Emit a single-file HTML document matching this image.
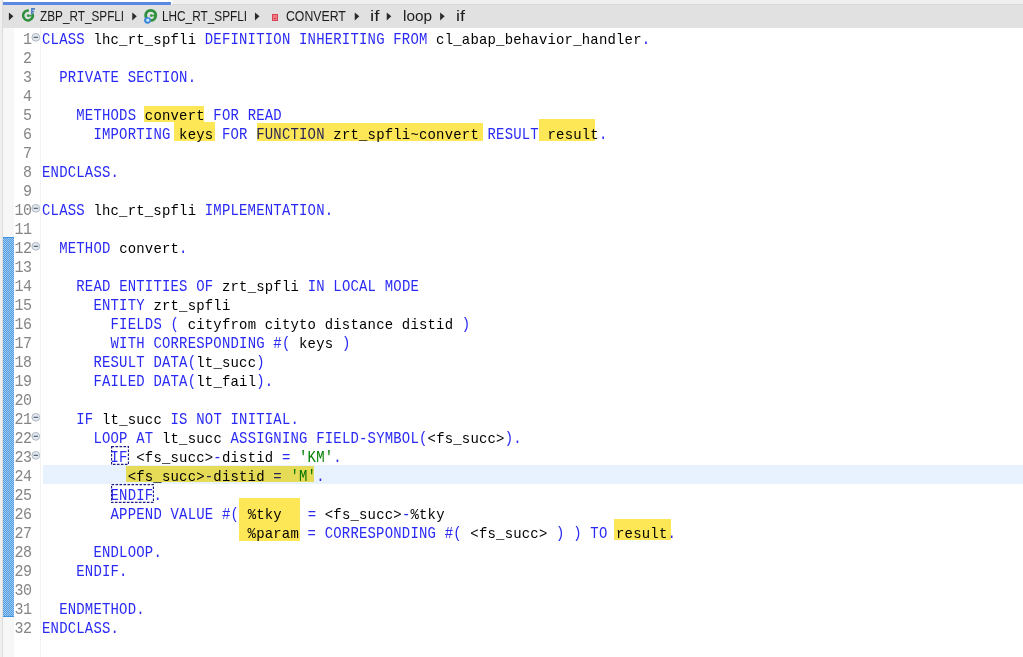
<!DOCTYPE html>
<html><head><meta charset="utf-8">
<style>
html,body{margin:0;padding:0;}
body{width:1023px;height:657px;overflow:hidden;background:#fff;position:relative;}
.a{position:absolute;}
.bc{position:absolute;top:7px;height:17px;line-height:17px;font-family:"Liberation Sans",sans-serif;font-size:15.4px;color:#1c1c1c;white-space:pre;transform-origin:0 13.8px;}
.ln{position:absolute;left:0;width:31.6px;text-align:right;font-family:"Liberation Mono",monospace;font-size:15px;letter-spacing:-0.433px;color:#858585;height:19px;transform:scaleY(1.07);transform-origin:0 13.5px;line-height:19px;white-space:pre;}
.cl{position:absolute;left:42px;transform:scaleX(0.93);transform-origin:0 0;font-family:"Liberation Mono",monospace;font-size:15px;letter-spacing:0.21px;color:#000;height:19px;line-height:19px;white-space:pre;}
.k{color:#2a2af5;display:inline-block;transform:scaleY(1.08);transform-origin:0 13.5px;}
.s{color:#008000;display:inline-block;transform:scaleY(1.08);transform-origin:0 13.5px;}
.fold{position:absolute;left:32px;width:7px;height:7px;border:1px solid #aab4be;border-radius:50%;background:#e2e8ee;}
.fold::after{content:"";position:absolute;left:1.5px;top:3px;width:4px;height:1px;background:#4a5a6a;}
.hl{position:absolute;background:#fde757;mix-blend-mode:multiply;}
</style></head><body>
<div class="a" style="left:0px;top:0px;width:2px;height:657px;background:#efefef;"></div>
<div class="a" style="left:2px;top:0px;width:1px;height:657px;background:#dcdcdc;"></div>
<div class="a" style="left:3px;top:0px;width:168px;height:2px;background:#ffffff;"></div>
<div class="a" style="left:3px;top:2px;width:168px;height:3px;background:#5a88e0;"></div>
<div class="a" style="left:172px;top:0px;width:851px;height:4px;background:#f0f0f0;"></div>
<div class="a" style="left:172px;top:4px;width:851px;height:1px;background:#d9d9d9;"></div>
<div class="a" style="left:3px;top:5px;width:1020px;height:23px;background:#e1e1e1;"></div>
<svg class="a" style="left:8px;top:12px" width="7" height="10" viewBox="0 0 7 10"><path d="M0.85 0.45 L5.40 4.35 L0.85 8.4 Z" fill="#2b2b2b"/></svg>
<svg class="a" style="left:20px;top:7px" width="18" height="17" viewBox="0 0 18 17">
  <path d="M8.85 3.67 A4.9 4.9 0 1 0 12.44 6.43" fill="none" stroke="#2e8f3c" stroke-width="2.5"/>
  <circle cx="8.2" cy="8.7" r="1.4" fill="#3a9a45"/>
  <path d="M8.2 8.7 L12.4 8.7" stroke="#3a9a45" stroke-width="1.6"/>
  <path d="M11.8 7.4 L11.8 1.9 L15 1.9 M11.8 4.6 L14.2 4.6" fill="none" stroke="#5482c6" stroke-width="1.6"/>
</svg>
<svg class="a" style="left:131px;top:12px" width="7" height="10" viewBox="0 0 7 10"><path d="M1.25 0.45 L5.80 4.35 L1.25 8.4 Z" fill="#2b2b2b"/></svg>
<svg class="a" style="left:142px;top:7px" width="18" height="18" viewBox="0 0 18 18">
  <circle cx="8.7" cy="8.4" r="5" fill="none" stroke="#2e8f3c" stroke-width="2.8"/>
  <circle cx="9.2" cy="8.6" r="1.3" fill="#3a9a45"/>
  <path d="M9 8.6 L13 8.6" stroke="#3a9a45" stroke-width="1.6"/>
  <circle cx="5.5" cy="13.3" r="3.4" fill="#3a86d8"/>
  <circle cx="5.8" cy="13.2" r="1.6" fill="#c8e4ff"/>
</svg>
<svg class="a" style="left:254px;top:12px" width="7" height="10" viewBox="0 0 7 10"><path d="M0.95 0.45 L5.50 4.35 L0.95 8.4 Z" fill="#2b2b2b"/></svg>
<div class="a" style="left:272px;top:14px;width:6px;height:7px;background:#dc4356;"></div>
<div class="a" style="left:273px;top:15px;width:4px;height:5px;background:#f07a83;"></div>
<div class="a" style="left:274px;top:18px;width:2px;height:1px;background:#c84450;"></div>
<svg class="a" style="left:354px;top:12px" width="7" height="10" viewBox="0 0 7 10"><path d="M0.75 0.45 L5.30 4.35 L0.75 8.4 Z" fill="#2b2b2b"/></svg>
<svg class="a" style="left:386px;top:12px" width="7" height="10" viewBox="0 0 7 10"><path d="M0.75 0.45 L5.30 4.35 L0.75 8.4 Z" fill="#2b2b2b"/></svg>
<svg class="a" style="left:439px;top:12px" width="7" height="10" viewBox="0 0 7 10"><path d="M1.15 0.45 L5.70 4.35 L1.15 8.4 Z" fill="#2b2b2b"/></svg>
<div class="bc" style="left:40.1px;transform:scaleX(0.7645)">ZBP_RT_SPFLI</div>
<div class="bc" style="left:161.9px;transform:scaleX(0.7673)">LHC_RT_SPFLI</div>
<div class="bc" style="left:286.4px;transform:scaleX(0.7979)">CONVERT</div>
<div class="bc" style="left:370.3px;transform:scaleX(1.2175)">if</div>
<div class="bc" style="left:403.4px;transform:scaleX(0.9957)">loop</div>
<div class="bc" style="left:456.3px;transform:scaleX(1.1688)">if</div>
<div class="a" style="left:3px;top:28px;width:11px;height:629px;background:#f7f7f7;"></div>
<div class="a" style="left:3px;top:237px;width:11px;height:380px;background:#75aeea;background-image:conic-gradient(#509ce5 25%,#a0c9f0 0 50%,#509ce5 0 75%,#a0c9f0 0);background-size:2px 2px;"></div>
<div class="a" style="left:3px;top:237px;width:11px;height:1px;background:#3f94e2;"></div>
<div class="a" style="left:3px;top:616px;width:11px;height:1px;background:#3f94e2;"></div>
<div class="a" style="left:40px;top:28px;width:1px;height:629px;background:#f3f3f3;"></div>
<div class="a" style="left:43px;top:465px;width:980px;height:19px;background:#e8f2fe;"></div>
<div class="ln" style="top:31px">1</div>
<svg class="a" style="left:31px;top:33px" width="10" height="10" viewBox="0 0 10 10"><circle cx="4.8" cy="4.3" r="3.9" fill="#e3e8ee" stroke="#a9b3bd" stroke-width="0.9"/><path d="M2.6 4.3 H7" stroke="#44546a" stroke-width="1.1"/></svg>
<div class="cl" style="top:31px"><span class="k">CLASS</span> lhc_rt_spfli <span class="k">DEFINITION</span> <span class="k">INHERITING</span> <span class="k">FROM</span> cl_abap_behavior_handler<span class="k">.</span></div>
<div class="ln" style="top:50px">2</div>
<div class="ln" style="top:69px">3</div>
<div class="cl" style="top:69px">  <span class="k">PRIVATE</span> <span class="k">SECTION</span><span class="k">.</span></div>
<div class="ln" style="top:88px">4</div>
<div class="ln" style="top:107px">5</div>
<div class="cl" style="top:107px">    <span class="k">METHODS</span> convert <span class="k">FOR</span> <span class="k">READ</span></div>
<div class="ln" style="top:126px">6</div>
<div class="cl" style="top:126px">      <span class="k">IMPORTING</span> keys <span class="k">FOR</span> <span class="k">FUNCTION</span> zrt_spfli~convert <span class="k">RESULT</span> result<span class="k">.</span></div>
<div class="ln" style="top:145px">7</div>
<div class="ln" style="top:164px">8</div>
<div class="cl" style="top:164px"><span class="k">ENDCLASS</span><span class="k">.</span></div>
<div class="ln" style="top:183px">9</div>
<div class="ln" style="top:202px">10</div>
<svg class="a" style="left:31px;top:204px" width="10" height="10" viewBox="0 0 10 10"><circle cx="4.8" cy="4.3" r="3.9" fill="#e3e8ee" stroke="#a9b3bd" stroke-width="0.9"/><path d="M2.6 4.3 H7" stroke="#44546a" stroke-width="1.1"/></svg>
<div class="cl" style="top:202px"><span class="k">CLASS</span> lhc_rt_spfli <span class="k">IMPLEMENTATION</span><span class="k">.</span></div>
<div class="ln" style="top:221px">11</div>
<div class="ln" style="top:240px">12</div>
<svg class="a" style="left:31px;top:242px" width="10" height="10" viewBox="0 0 10 10"><circle cx="4.8" cy="4.3" r="3.9" fill="#e3e8ee" stroke="#a9b3bd" stroke-width="0.9"/><path d="M2.6 4.3 H7" stroke="#44546a" stroke-width="1.1"/></svg>
<div class="cl" style="top:240px">  <span class="k">METHOD</span> convert<span class="k">.</span></div>
<div class="ln" style="top:259px">13</div>
<div class="ln" style="top:278px">14</div>
<div class="cl" style="top:278px">    <span class="k">READ</span> <span class="k">ENTITIES</span> <span class="k">OF</span> zrt_spfli <span class="k">IN</span> <span class="k">LOCAL</span> <span class="k">MODE</span></div>
<div class="ln" style="top:297px">15</div>
<div class="cl" style="top:297px">      <span class="k">ENTITY</span> zrt_spfli</div>
<div class="ln" style="top:316px">16</div>
<div class="cl" style="top:316px">        <span class="k">FIELDS</span> <span class="k">(</span> cityfrom cityto distance distid <span class="k">)</span></div>
<div class="ln" style="top:335px">17</div>
<div class="cl" style="top:335px">        <span class="k">WITH</span> <span class="k">CORRESPONDING</span> <span class="k">#</span><span class="k">(</span> keys <span class="k">)</span></div>
<div class="ln" style="top:354px">18</div>
<div class="cl" style="top:354px">      <span class="k">RESULT</span> <span class="k">DATA</span><span class="k">(</span>lt_succ<span class="k">)</span></div>
<div class="ln" style="top:373px">19</div>
<div class="cl" style="top:373px">      <span class="k">FAILED</span> <span class="k">DATA</span><span class="k">(</span>lt_fail<span class="k">)</span><span class="k">.</span></div>
<div class="ln" style="top:392px">20</div>
<div class="ln" style="top:411px">21</div>
<svg class="a" style="left:31px;top:413px" width="10" height="10" viewBox="0 0 10 10"><circle cx="4.8" cy="4.3" r="3.9" fill="#e3e8ee" stroke="#a9b3bd" stroke-width="0.9"/><path d="M2.6 4.3 H7" stroke="#44546a" stroke-width="1.1"/></svg>
<div class="cl" style="top:411px">    <span class="k">IF</span> lt_succ <span class="k">IS</span> <span class="k">NOT</span> <span class="k">INITIAL</span><span class="k">.</span></div>
<div class="ln" style="top:430px">22</div>
<svg class="a" style="left:31px;top:432px" width="10" height="10" viewBox="0 0 10 10"><circle cx="4.8" cy="4.3" r="3.9" fill="#e3e8ee" stroke="#a9b3bd" stroke-width="0.9"/><path d="M2.6 4.3 H7" stroke="#44546a" stroke-width="1.1"/></svg>
<div class="cl" style="top:430px">      <span class="k">LOOP</span> <span class="k">AT</span> lt_succ <span class="k">ASSIGNING</span> <span class="k">FIELD-SYMBOL</span><span class="k">(</span>&lt;fs_succ&gt;<span class="k">)</span><span class="k">.</span></div>
<div class="ln" style="top:449px">23</div>
<svg class="a" style="left:31px;top:451px" width="10" height="10" viewBox="0 0 10 10"><circle cx="4.8" cy="4.3" r="3.9" fill="#e3e8ee" stroke="#a9b3bd" stroke-width="0.9"/><path d="M2.6 4.3 H7" stroke="#44546a" stroke-width="1.1"/></svg>
<div class="cl" style="top:449px">        <span class="k">IF</span> &lt;fs_succ&gt;<span class="k">-</span>distid <span class="k">=</span> <span class="s">&#x27;KM&#x27;</span><span class="k">.</span></div>
<div class="ln" style="top:468px">24</div>
<div class="cl" style="top:468px">          &lt;fs_succ&gt;<span class="k">-</span>distid <span class="k">=</span> <span class="s">&#x27;M&#x27;</span><span class="k">.</span></div>
<div class="ln" style="top:487px">25</div>
<div class="cl" style="top:487px">        <span class="k">ENDIF</span><span class="k">.</span></div>
<div class="ln" style="top:506px">26</div>
<div class="cl" style="top:506px">        <span class="k">APPEND</span> <span class="k">VALUE</span> <span class="k">#</span><span class="k">(</span> %tky   <span class="k">=</span> &lt;fs_succ&gt;<span class="k">-</span>%tky</div>
<div class="ln" style="top:525px">27</div>
<div class="cl" style="top:525px">                        %param <span class="k">=</span> <span class="k">CORRESPONDING</span> <span class="k">#</span><span class="k">(</span> &lt;fs_succ&gt; <span class="k">)</span> <span class="k">)</span> <span class="k">TO</span> result<span class="k">.</span></div>
<div class="ln" style="top:544px">28</div>
<div class="cl" style="top:544px">      <span class="k">ENDLOOP</span><span class="k">.</span></div>
<div class="ln" style="top:563px">29</div>
<div class="cl" style="top:563px">    <span class="k">ENDIF</span><span class="k">.</span></div>
<div class="ln" style="top:582px">30</div>
<div class="ln" style="top:601px">31</div>
<div class="cl" style="top:601px">  <span class="k">ENDMETHOD</span><span class="k">.</span></div>
<div class="ln" style="top:620px">32</div>
<div class="cl" style="top:620px"><span class="k">ENDCLASS</span><span class="k">.</span></div>
<svg class="a" style="left:111px;top:446px" width="18" height="19"><rect x="0.5" y="0.5" width="17" height="18" fill="none" stroke="#1c1c84" stroke-width="1.3" stroke-dasharray="2.6 1.4"/></svg>
<svg class="a" style="left:111px;top:484px" width="43" height="19"><rect x="0.5" y="0.5" width="42" height="18" fill="none" stroke="#1c1c84" stroke-width="1.3" stroke-dasharray="2.6 1.4"/></svg>
<div class="hl" style="left:144.2px;top:106.2px;width:60.0px;height:16.1px"></div>
<div class="hl" style="left:173.9px;top:122.3px;width:41.6px;height:18.8px"></div>
<div class="hl" style="left:257.1px;top:123.2px;width:225.6px;height:18.3px"></div>
<div class="hl" style="left:538.6px;top:118.6px;width:56.1px;height:22.5px"></div>
<div class="hl" style="left:126px;top:466.2px;width:188.4px;height:15.8px"></div>
<div class="hl" style="left:239.2px;top:498.4px;width:60.7px;height:42.2px"></div>
<div class="hl" style="left:614.3px;top:518.6px;width:56.4px;height:21.9px"></div>
</body></html>
